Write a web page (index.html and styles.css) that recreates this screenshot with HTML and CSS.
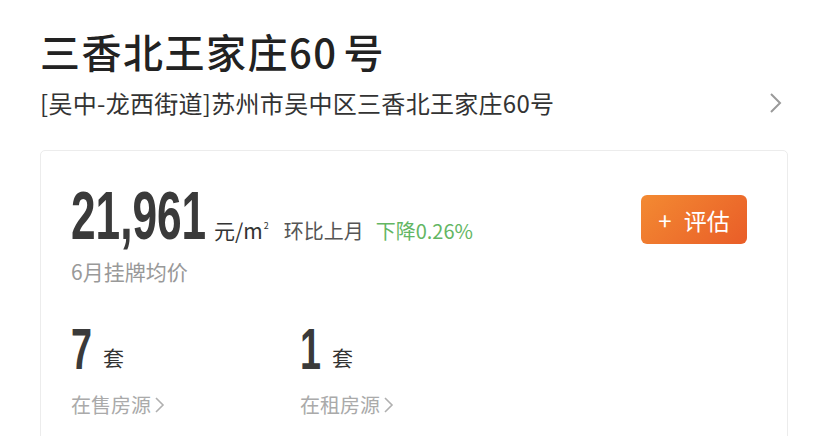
FILE: index.html
```html
<!DOCTYPE html>
<html lang="zh-CN">
<head>
<meta charset="utf-8">
<link rel="stylesheet" href="styles.css">
</head>
<body>
<div class="page">
  <h1 class="title">三香北王家庄60<span class="hao">号</span></h1>
  <div class="addr">
    <span class="addr-text">[吴中-龙西街道]苏州市吴中区三香北王家庄60号</span>
    <svg class="chev" width="14" height="22" viewBox="0 0 14 22"><path d="M2 2 L11 11 L2 20" fill="none" stroke="#9a9a9a" stroke-width="2"/></svg>
  </div>
  <div class="card">
    <div class="price-row">
      <div class="price-col">
        <div class="price-line">
          <span class="bignum-box w-price"><span class="bignum">21,961</span></span>
          <span class="unit">元/m<sup class="sq">2</sup></span>
          <span class="mom">环比上月</span>
          <span class="down">下降0.26%</span>
        </div>
        <div class="label">6月挂牌均价</div>
      </div>
      <button class="btn"><span class="plus">+</span>评估</button>
    </div>
    <div class="stats">
      <div class="stat">
        <div class="stat-line"><span class="bignum-box num-sm w-one"><span class="bignum">7</span></span><span class="tao">套</span></div>
        <div class="stat-link">在售房源<svg class="mini-chev" width="12" height="20" viewBox="0 0 12 20"><path d="M2 3 L9 10 L2 17" fill="none" stroke="#b0b0b0" stroke-width="1.6"/></svg></div>
      </div>
      <div class="stat">
        <div class="stat-line"><span class="bignum-box num-sm w-one"><span class="bignum">1</span></span><span class="tao">套</span></div>
        <div class="stat-link">在租房源<svg class="mini-chev" width="12" height="20" viewBox="0 0 12 20"><path d="M2 3 L9 10 L2 17" fill="none" stroke="#b0b0b0" stroke-width="1.6"/></svg></div>
      </div>
    </div>
  </div>
</div>
</body>
</html>
```

FILE: styles.css
```css
* { box-sizing: border-box; }
html, body { margin: 0; padding: 0; background: #fff; }
body {
  font-family: "Noto Sans CJK SC", "Noto Sans", sans-serif;
  color: #333;
  overflow: hidden;
  height: 436px;
}
.page { padding: 27px 40px 0 40px; }
.title {
  margin: 0;
  font-size: 40px;
  line-height: 48px;
  font-weight: 500;
  color: #222;
  letter-spacing: 1.5px;
}
.hao { margin-left: 6px; }
.addr {
  display: flex;
  align-items: center;
  justify-content: space-between;
  margin-top: 12px;
  height: 32px;
}
.addr-text {
  font-size: 24px;
  line-height: 32px;
  font-weight: 400;
  color: #333;
  letter-spacing: 0.3px;
}
.chev { margin-right: 5px; }
.card {
  margin-top: 31px;
  border: 1px solid #ececec;
  border-radius: 5px;
  padding: 34px 40px 30px 30px;
  height: 300px;
}
.price-row {
  display: flex;
  justify-content: space-between;
  align-items: flex-start;
}
.price-line {
  display: flex;
  align-items: baseline;
  height: 60px;
}
.bignum-box {
  display: inline-block;
  font-family: "Liberation Sans", Arial, sans-serif;
  font-weight: 700;
  color: #3a3a3a;
  font-size: 68px;
  line-height: 60px;
  white-space: nowrap;
}
.bignum {
  display: inline-block;
  transform: scaleX(0.65);
  transform-origin: left center;
}
.w-price { width: 143px; }
.num-sm { font-size: 58px; line-height: 52px; }
.w-one { width: 32px; }
.unit {
  font-size: 21px;
  color: #333;
}
.sq { font-size: 9px; vertical-align: 10px; margin-left: 1px; }
.mom {
  font-size: 20px;
  color: #555;
  margin-left: 15px;
}
.down {
  font-size: 20px;
  color: #63b663;
  margin-left: 12px;
}
.label {
  margin-top: 12px;
  font-size: 21px;
  line-height: 28px;
  color: #999;
}
.btn {
  margin-top: 10px;
  width: 106px;
  height: 49px;
  border: none;
  border-radius: 6px;
  background: linear-gradient(135deg, #f38a32 0%, #e95d28 100%);
  color: #fff;
  font-family: "Noto Sans CJK SC", sans-serif;
  font-size: 23px;
  display: flex;
  align-items: center;
  justify-content: center;
  padding: 0;
}
.plus { margin-right: 12px; font-size: 24px; }
.stats {
  display: flex;
  margin-top: 38px;
}
.stat { width: 229px; }
.stat-line {
  display: flex;
  align-items: flex-end;
  height: 52px;
}
.tao {
  font-size: 21px;
  line-height: 24px;
  color: #333;
  margin-bottom: 6px;
}
.stat-link {
  margin-top: 16px;
  font-size: 20px;
  line-height: 28px;
  color: #aaa;
  display: flex;
  align-items: center;
}
.mini-chev { margin-left: 3px; }
```
